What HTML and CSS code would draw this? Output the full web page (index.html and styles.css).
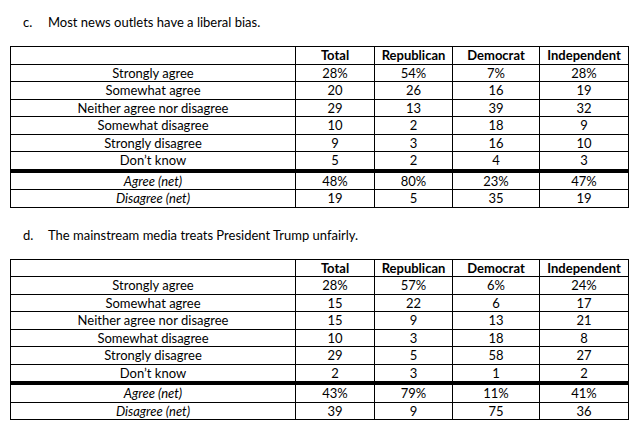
FILE: index.html
```html
<!DOCTYPE html>
<html lang="en">
<head>
<meta charset="utf-8">
<title>Survey tables</title>
<link rel="stylesheet" href="styles.css">
</head>
<body>
<section class="question q-c">
  <h2 class="q-title"><span class="q-letter">c.</span><span class="q-text">Most news outlets have a liberal bias.</span></h2>
  <table class="results">
    <colgroup><col class="c-label"><col class="c-total"><col class="c-rep"><col class="c-dem"><col class="c-ind"></colgroup>
    <thead>
      <tr><th></th><th>Total</th><th>Republican</th><th>Democrat</th><th>Independent</th></tr>
    </thead>
    <tbody>
      <tr><td>Strongly agree</td><td>28%</td><td>54%</td><td>7%</td><td>28%</td></tr>
      <tr><td>Somewhat agree</td><td>20</td><td>26</td><td>16</td><td>19</td></tr>
      <tr><td>Neither agree nor disagree</td><td>29</td><td>13</td><td>39</td><td>32</td></tr>
      <tr><td>Somewhat disagree</td><td>10</td><td>2</td><td>18</td><td>9</td></tr>
      <tr><td>Strongly disagree</td><td>9</td><td>3</td><td>16</td><td>10</td></tr>
      <tr><td>Don’t know</td><td>5</td><td>2</td><td>4</td><td>3</td></tr>
      <tr class="net net-first"><td><em>Agree (net)</em></td><td>48%</td><td>80%</td><td>23%</td><td>47%</td></tr>
      <tr class="net"><td><em>Disagree (net)</em></td><td>19</td><td>5</td><td>35</td><td>19</td></tr>
    </tbody>
  </table>
</section>
<section class="question q-d">
  <h2 class="q-title"><span class="q-letter">d.</span><span class="q-text">The mainstream media treats President Trump unfairly.</span></h2>
  <table class="results">
    <colgroup><col class="c-label"><col class="c-total"><col class="c-rep"><col class="c-dem"><col class="c-ind"></colgroup>
    <thead>
      <tr><th></th><th>Total</th><th>Republican</th><th>Democrat</th><th>Independent</th></tr>
    </thead>
    <tbody>
      <tr><td>Strongly agree</td><td>28%</td><td>57%</td><td>6%</td><td>24%</td></tr>
      <tr><td>Somewhat agree</td><td>15</td><td>22</td><td>6</td><td>17</td></tr>
      <tr><td>Neither agree nor disagree</td><td>15</td><td>9</td><td>13</td><td>21</td></tr>
      <tr><td>Somewhat disagree</td><td>10</td><td>3</td><td>18</td><td>8</td></tr>
      <tr><td>Strongly disagree</td><td>29</td><td>5</td><td>58</td><td>27</td></tr>
      <tr><td>Don’t know</td><td>2</td><td>3</td><td>1</td><td>2</td></tr>
      <tr class="net net-first"><td><em>Agree (net)</em></td><td>43%</td><td>79%</td><td>11%</td><td>41%</td></tr>
      <tr class="net"><td><em>Disagree (net)</em></td><td>39</td><td>9</td><td>75</td><td>36</td></tr>
    </tbody>
  </table>
</section>
</body>
</html>
```

FILE: styles.css
```css
html, body {
  margin: 0;
  padding: 0;
  background: #ffffff;
}

body {
  font-family: "Lato", "Liberation Sans", sans-serif;
  font-size: 13px;
  color: #000000;
}

.question {
  padding-left: 10px;
}

.q-c {
  padding-top: 14px;
}

.q-d {
  padding-top: 19px;
}

.q-title {
  margin: 0 0 16px 0;
  font-size: 13px;
  font-weight: normal;
  line-height: 16px;
  display: flex;
  padding-left: 13px;
}

.q-letter {
  width: 25px;
  flex: none;
}

.results {
  border-collapse: collapse;
  table-layout: fixed;
  width: 618px;
}

.c-label { width: 285px; }
.c-total { width: 79px; }
.c-rep { width: 78px; }
.c-dem { width: 87px; }
.c-ind { width: 89px; }

.results th,
.results td {
  border: 1px solid #000000;
  padding: 0;
  text-align: center;
  height: 16.5px;
  line-height: 14px;
  white-space: nowrap;
  vertical-align: middle;
}

.results th {
  font-weight: bold;
}

.results em {
  font-style: italic;
}

.net-first td {
  border-top: 4px solid #000000;
}
```
